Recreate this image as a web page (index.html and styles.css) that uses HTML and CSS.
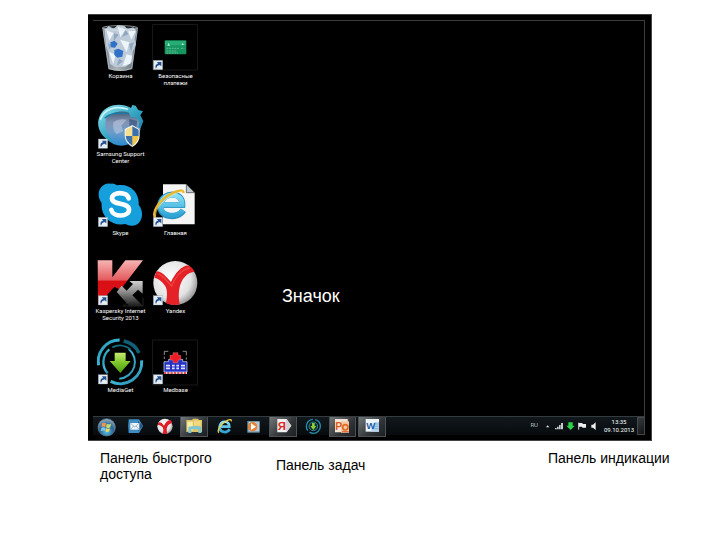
FILE: index.html
```html
<!DOCTYPE html>
<html lang="ru">
<head>
<meta charset="utf-8">
<title>Рабочий стол</title>
<link rel="stylesheet" href="styles.css">
</head>
<body>
<svg class="defs" aria-hidden="true">
  <defs>
    <linearGradient id="teal" x1="0" y1="0" x2="1" y2="1"><stop offset="0" stop-color="#8fe4ee"/><stop offset=".5" stop-color="#35a6c4"/><stop offset="1" stop-color="#0f6e9c"/></linearGradient>
    <linearGradient id="globe" x1="0" y1="0" x2="0" y2="1"><stop offset="0" stop-color="#31475f"/><stop offset=".4" stop-color="#8294b4"/><stop offset=".65" stop-color="#6f9cc9"/><stop offset="1" stop-color="#2a8ad0"/></linearGradient>
    <linearGradient id="red" x1="0" y1="0" x2="0" y2="1"><stop offset="0" stop-color="#f7b3b3"/><stop offset=".44" stop-color="#e25a5c"/><stop offset=".46" stop-color="#d90d14"/><stop offset="1" stop-color="#e0161c"/></linearGradient>
    <linearGradient id="grey" x1="0" y1="0" x2="0" y2="1"><stop offset="0" stop-color="#d0d0d0"/><stop offset=".45" stop-color="#8c8c8c"/><stop offset="1" stop-color="#1c1c1c"/></linearGradient>
    <linearGradient id="green" x1="0" y1="0" x2="0" y2="1"><stop offset="0" stop-color="#c8ea72"/><stop offset=".5" stop-color="#7cc62a"/><stop offset="1" stop-color="#4b9a12"/></linearGradient>
    <linearGradient id="ring" x1="0" y1="0" x2="1" y2="1"><stop offset="0" stop-color="#1f8fa8"/><stop offset=".5" stop-color="#3cb6d6"/><stop offset="1" stop-color="#2a86a4"/></linearGradient>
    <linearGradient id="bin" x1="0" y1="0" x2="1" y2="0"><stop offset="0" stop-color="#8e9aa2"/><stop offset=".4" stop-color="#e9f2f8"/><stop offset="1" stop-color="#7f8c96"/></linearGradient>
    <radialGradient id="ball" cx=".4" cy=".4" r=".65"><stop offset="0" stop-color="#fff"/><stop offset=".7" stop-color="#e2e2e2"/><stop offset="1" stop-color="#8f8f8f"/></radialGradient>
    <radialGradient id="orb" cx=".5" cy=".75" r=".7"><stop offset="0" stop-color="#58c4e8"/><stop offset=".55" stop-color="#2a6391"/><stop offset="1" stop-color="#8aa6ba"/></radialGradient>
    <linearGradient id="ie" x1="0" y1="0" x2="0" y2="1"><stop offset="0" stop-color="#8be0f8"/><stop offset="1" stop-color="#2fa5d6"/></linearGradient>
    <g id="shortcut">
      <rect width="28" height="28" fill="#e6edf2" stroke="#8798a6"/>
      <path d="M8 25C4 16 8 11 14 10L11 5l13 0 0 13-5-4c-6 1-9 4-11 11z" fill="#24518f"/>
    </g>
  </defs>
</svg>

<main class="screen">
  <section class="desktop" aria-label="Рабочий стол">
    <button class="shortcut"><svg class="pic" viewBox="39 41 144 144">
      <path d="M55 52L162 52 145 177Q109 187 73 177z" fill="url(#bin)" opacity=".75"/>
      <path d="M61 58l13-10 15 7 12-10 20 2 10 9 17-5 9 12-5 25 4 14-10 22-1 30-20 15-31 1-16-9-4-33-8-21z" fill="#bdcbd9"/>
      <path d="M67 60l22 8-13 23zM101 50l24 7-16 23zM132 63l23-2-13 27zM108 88l28 8-8 30zM75 125l20 8-7 29zM128 132l16 4-5 24-23 7z" fill="#edf4fa"/>
      <path d="M90 68l14 5-15 19zM125 58l8 14-19 8zM135 101l15-6-9 30zM82 105l-10-8 4 22zM105 145l12 8-19 14z" fill="#8fa8bf"/>
      <path d="M79 96l13-5 9 9-8 12-12-1zM91 119l12-4 15 7-3 17-15 3-9-8z" fill="#2f70c8"/>
      <ellipse cx="108" cy="53" rx="53" ry="7" fill="none" stroke="#dce5ea" stroke-width="2"/>
      <path d="M57 57L75 174Q108 187 143 174L160 57" fill="none" stroke="#b6c3cc" stroke-width="2"/>
    </svg><span class="name">Корзина</span></button>
    <button class="shortcut"><svg class="pic" viewBox="204 41 144 144">
      <rect x="206" y="43" width="134" height="136" fill="#000" stroke="#242424" stroke-width="2"/>
      <rect x="242" y="90" width="65" height="42" rx="3" fill="#159560"/>
      <path d="M243 92h62v13h-62z" fill="#28ac75"/>
      <path d="M250 106l4-9 4 9zM292 104l4-6 4 6z" fill="#b9f0d0"/>
      <path d="M247 114h38M291 114h10M247 122h30M247 128h35" stroke="#7ed1a8" stroke-width="2" stroke-dasharray="6 2"/>
      <use href="#shortcut" x="208" y="150"/>
    </svg><span class="name">Безопасные платежи</span></button>

    <button class="shortcut"><svg class="pic" viewBox="39 21 144 144">
      <circle cx="112" cy="94" r="58" fill="url(#globe)"/>
      <path d="M88 83Q102 70 128 74L112 92 118 108 98 118Q84 104 88 83z" fill="#cfdaea" opacity=".45"/>
      <path d="M136 72l24 6-4 24-20-4z" fill="#284a74" opacity=".6"/>
      <path d="M78 139C46 121 32 86 51 56 69 28 111 22 141 39l4-9 10 2 8 13 14 4-8 12 9 17-8 22-7-3 3-16-9-13-17-2-5-13C113 44 80 51 66 72 59 96 70 120 92 148z" fill="url(#teal)"/>
      <path d="M49 74C60 43 94 30 132 43" stroke="#c4f6f7" stroke-width="5" fill="none"/>
      <path d="M62 70C78 54 100 51 132 56" stroke="#167ca6" stroke-width="4" fill="none"/>
      <path d="M145 90l21 12 1 20q0 21-22 34-22-13-23-34l0-20z" fill="#edf3f5"/>
      <path d="M145 94v29h-20l0-19zM145 123h19q-2 18-19 29z" fill="#f5df8c"/>
      <path d="M145 123h19q-2 18-19 29z" fill="#f2c447"/>
      <path d="M145 94l19 10v19h-19zM125 123h20v29q-18-11-20-29z" fill="#3d6fa9"/>
      <use href="#shortcut" x="43" y="132"/>
    </svg><span class="name">Samsung Support Center</span></button>
    <span></span>

    <button class="shortcut"><svg class="pic" viewBox="39 17 144 144">
      <path d="M79 25Q89 22 99 30C137 22 167 52 164 88C184 113 173 153 142 151Q133 151 124 146C82 154 49 122 53 83C31 55 52 20 79 25z" fill="#159fdc"/>
      <path d="M134 69C130 48 84 48 84 69C84 91 135 80 135 103C135 125 88 127 82 104" fill="none" stroke="#fff" stroke-width="14" stroke-linecap="round"/>
      <use href="#shortcut" x="43" y="126"/>
    </svg><span class="name">Skype</span></button>
    <button class="shortcut"><svg class="pic" viewBox="204 17 144 144">
      <path d="M237 27h70l25 25v95h-95z" fill="#f5f5f5"/>
      <path d="M307 27v25h25z" fill="#bfc7cc" stroke="#303c43" stroke-width="2"/>
      <path d="M235 89H295C298 48 237 47 229 86C222 126 280 135 298 105" fill="none" stroke="#2b93c0" stroke-width="18"/>
      <path d="M235 88H294C296 51 240 49 231 86C225 122 277 131 297 104" fill="none" stroke="url(#ie)" stroke-width="15"/>
      <path d="M216 132C199 112 225 74 264 54C282 44 300 42 298 53" fill="none" stroke="#edb72a" stroke-width="7"/>
      <path d="M215 124C211 98 252 57 295 48" fill="none" stroke="#ffe687" stroke-width="2"/>
      <use href="#shortcut" x="208" y="126"/>
    </svg><span class="name">Главная</span></button>

    <button class="shortcut"><svg class="pic" viewBox="39 11 144 144">
      <path d="M41 15h44v51l39-51h53L109 103l-18-9-49 56z" fill="url(#red)"/>
      <path d="M176 77h-40l11 9-19 20-15-15-15 19 37 41h41l-31-31 17-17 14 12z" fill="url(#grey)"/>
      <path d="M122 124l14 13-18 15h59v-25" fill="none" stroke="#666" stroke-width="1"/>
      <use href="#shortcut" x="43" y="121"/>
    </svg><span class="name">Kaspersky Internet Security 2013</span></button>
    <button class="shortcut"><svg class="pic" viewBox="204 11 144 144">
      <circle cx="274" cy="83" r="66" fill="url(#ball)"/>
      <path d="M217 48C232 48 245 62 261 80C273 54 295 28 315 31Q326 36 332 49C309 50 291 72 286 100Q282 121 287 147Q264 152 246 143C250 122 251 103 243 91C234 77 224 70 211 67z" fill="#e32127"/>
      <path d="M220 55C235 58 248 77 263 92C274 64 294 42 317 38" fill="none" stroke="#ee4642" stroke-width="4"/>
      <use href="#shortcut" x="208" y="121"/>
    </svg><span class="name">Yandex</span></button>

    <button class="shortcut"><svg class="pic" viewBox="39 16 144 144">
      <g fill="none" stroke="url(#ring)">
        <path d="M44 98A64 64 0 0 1 107 22" stroke-width="9"/>
        <path d="M173 83A64 64 0 0 1 80 146" stroke-width="9"/>
        <path d="M71 122A50 50 0 0 1 76 50" stroke-width="7"/>
        <path d="M134 49A50 50 0 0 1 106 138" stroke-width="6"/>
        <path d="M119 25A64 64 0 0 1 165 61" stroke="#116078" stroke-width="11"/>
        <path d="M85 44A50 50 0 0 1 139 50" stroke="#176b80" stroke-width="6"/>
      </g>
      <path d="M92 60h33v25h15l-31 36-32-36h15z" fill="url(#green)"/>
      <use href="#shortcut" x="43" y="126"/>
    </svg><span class="name">MediaGet</span></button>
    <button class="shortcut"><svg class="pic" viewBox="204 16 144 144">
      <rect x="206" y="22" width="134" height="135" fill="#000" stroke="#242424" stroke-width="2"/>
      <path d="M241 67V56h12M296 56h11v12M241 72v7M307 74v7" fill="none" stroke="#ccc" stroke-width="2"/>
      <path d="M240 87h14v-7h42v7h13v31h-69z" fill="#2533c5" stroke="#dce0ff" stroke-width="2"/>
      <path d="M246 96h12v14h-12zM264 96h8v14h-8zM277 96h8v14h-8zM291 96h12v14h-12z" fill="#dfe2ff"/>
      <path d="M246 103h57" stroke="#2533c5" stroke-width="3"/>
      <path d="M267 60h15v8h8v14h-8v8h-15v-8h-9V68h9z" fill="#ee1c24" stroke="#f8a2a5" stroke-width="1"/>
      <path d="M240 121h69" stroke="#fff" stroke-width="5"/><path d="M240 121h69" stroke="#e02027" stroke-width="5" stroke-dasharray="6 4"/>
      <use href="#shortcut" x="208" y="126"/>
    </svg><span class="name">Medbase</span></button>
    <p class="note">Значок</p>
  </section>

  <footer class="taskbar">
    <nav class="tasks" aria-label="Панель задач">
      <button class="task" aria-label="Пуск"><svg viewBox="31 49 72 57">
        <circle cx="66" cy="77" r="26" fill="url(#orb)" stroke="#638096" stroke-width="2"/>
        <path d="M52 66q6-5 12-1l-2 11q-6-3-12 1z" fill="#ed9656"/><path d="M66 66q6 4 13 0l-2 11q-6 4-13 0z" fill="#c8dc72"/>
        <path d="M50 79q6-4 12 0l-2 9q-6-3-12 1z" fill="#81c6ee"/><path d="M64 80q6 4 12 0l-2 9q-6 4-12 0z" fill="#f7d35f"/>
      </svg></button>
      <button class="task" aria-label="Почта"><svg viewBox="117 51 72 57">
        <path d="M134 55h31l12 20-12 21h-31q-3-20 0-41z" fill="#418bc3"/><path d="M162 60l14 15-14 16z" fill="#1d5688"/>
        <path d="M139 66h27v20h-27z" fill="#eff5fa"/><path d="M139 66l13 12 14-12M139 86l10-11M166 86l-10-11" fill="none" stroke="#7195b2" stroke-width="2"/>
      </svg></button>
      <button class="task" aria-label="Yandex"><svg viewBox="205 51 72 57">
        <circle cx="244" cy="76" r="23" fill="url(#ball)"/>
        <path d="M224 65q8-5 17 9 9-18 21-16l4 8q-15 3-17 18l1 15h-12l1-15q-3-11-17-12z" fill="#df1b24"/>
      </svg></button>
      <button class="task open" aria-label="Проводник"><svg viewBox="296 50 72 57">
        <path d="M309 59h17l3-4h15l3 4h9v36h-47z" fill="#dec465"/>
        <path d="M312 64h16v27h-16z" fill="#f8eda7"/><path d="M332 61h20v15h-20z" fill="#eed980"/>
        <path d="M315 98V80q18-6 39 0v18h-9V87h-21v11z" fill="#80c5d5"/>
      </svg></button>
      <button class="task" aria-label="Internet Explorer"><svg viewBox="384 51 72 57">
        <path d="M409 77h27c1-19-25-20-29-1-2 17 20 24 30 9" fill="none" stroke="url(#ie)" stroke-width="8"/>
        <path d="M405 95c-8-5 5-27 24-36 9-5 15-4 12 2" fill="none" stroke="#efce49" stroke-width="4"/>
      </svg></button>
      <button class="task" aria-label="Проигрыватель"><svg viewBox="35 51 72 57">
        <path d="M54 60h37v35H54z" fill="#7295ab"/><path d="M58 63h32v28H58z" fill="#b8cbd5"/>
        <circle cx="70" cy="77" r="14" fill="#e68136"/><path d="M65 67l15 10-15 10z" fill="#fff"/>
      </svg></button>
      <button class="task open" aria-label="Яндекс"><svg viewBox="124 51 72 57">
        <path d="M143 57h28l14 20-14 20h-28z" fill="#f0f0f0"/><path d="M169 57l16 20-16 20z" fill="#d3d3d3"/>
        <text class="glyph ya" x="144" y="91">Я</text>
      </svg></button>
      <button class="task" aria-label="MediaGet"><svg viewBox="213 51 72 57">
        <circle cx="250" cy="76" r="21" fill="none" stroke="#2590ac" stroke-width="4" stroke-dasharray="45 7"/>
        <circle cx="250" cy="76" r="13" fill="#152c27" stroke="#2f88a2" stroke-width="3"/>
        <path d="M246 66h8v9h5l-9 12-9-12h5z" fill="#8bcf37"/>
      </svg></button>
      <button class="task open" aria-label="PowerPoint"><svg viewBox="303 50 72 57">
        <path d="M318 56h38l4 40h-42z" fill="#f6e5da"/><path d="M336 63h24v34h-24z" fill="#f7c7a2"/>
        <text class="glyph ppt" x="319" y="88">P</text><circle cx="349" cy="81" r="8" fill="none" stroke="#df6b24" stroke-width="5"/><path d="M339 94h20" stroke="#dc621e" stroke-width="3"/>
      </svg></button>
      <button class="task open" aria-label="Word"><svg viewBox="391 50 72 57">
        <path d="M408 56h40v38h-40z" fill="#edf4fa"/><path d="M434 65h14v29h-25z" fill="#b4d2ed"/>
        <text class="glyph word" x="410" y="86">W</text><path d="M437 71h10M436 78h11M434 85h13" stroke="#699bc9" stroke-width="2"/>
      </svg></button>
    </nav>
    <div class="tray">
      <span class="lang">RU</span>
      <svg class="status" viewBox="0 0 123 30" aria-hidden="true">
        <path d="M0 19l5-6 5 6z" fill="#ddd"/>
        <path d="M27 25v-4h5v4zM33 25v-8h5v8zM39 25V12h5v13zM45 25V6h6v19z" fill="#c6cbce"/>
        <path d="M67 4h13v10h6l-12 13-13-13h6z" fill="#2bd447"/>
        <path d="M98 5v21" stroke="#ddd" stroke-width="3"/><path d="M99 6h9l3 3h9v11h-10l-3-3h-8z" fill="#eee"/>
      </svg>
      <svg class="sound" viewBox="0 0 18 30" aria-hidden="true"><path d="M1 11h5l8-7v23l-8-7H1z" fill="#eee"/></svg>
      <time class="clock" datetime="2013-10-09T13:35">13:35<br>09.10.2013</time>
      <button class="peek" aria-label="Свернуть все окна"></button>
    </div>
  </footer>
</main>

<section class="captions">
  <p class="quick">Панель быстрого доступа</p>
  <p class="bar">Панель задач</p>
  <p>Панель индикации</p>
</section>
</body>
</html>
```
FILE: styles.css
```css
* { box-sizing: border-box; }

body {
  margin: 0;
  background: #fff;
  color: #000;
  font-family: "Liberation Sans", Arial, sans-serif;
}

p { margin: 0; }

button {
  margin: 0;
  padding: 0;
  border: 0;
  background: none;
  color: inherit;
  font: inherit;
}

svg { display: block; }

.defs {
  position: absolute;
  width: 0;
  height: 0;
}

.screen {
  margin: 14px 68px 0 88px;
  padding: 5px 6px 5px 5px;
  border: 1px solid #444;
  border-left: 0;
  background: #000;
  color: #fff;
}

.desktop {
  position: relative;
  display: grid;
  grid-template-columns: 55px 55px;
  grid-template-rows: repeat(5, 1fr);
  min-height: 396px;
  padding-top: 3px;
  border-top: 1px solid #3c3c3c;
  border-right: 1px solid #3c3c3c;
}

.shortcut {
  display: flex;
  flex-direction: column;
  align-items: center;
}

.pic {
  width: 48px;
  height: 48px;
}

.name {
  width: 50px;
  font: 6px/7px Roboto, "Noto Sans", sans-serif;
  text-align: center;
}

.note {
  position: absolute;
  left: 189px;
  top: 264px;
  font-size: 18px;
  line-height: 22px;
}

.taskbar {
  display: flex;
  justify-content: space-between;
  height: 19px;
  border-top: 1px solid #343c40;
  background: linear-gradient(#11181d, #070b0e);
}

.tasks {
  display: grid;
  grid-template-columns: 27px repeat(9, 1fr);
  width: 294px;
}

.task {
  display: flex;
  justify-content: center;
  align-items: center;
  margin: 0 1px;
}

.task svg {
  flex: none;
  width: 24px;
  height: 19px;
}

.open {
  border: 1px solid #4c5154;
  border-top: 0;
  background: linear-gradient(135deg, #73777a, #303437 60%, #1c2023);
}

.glyph {
  font-family: "Liberation Sans", Arial, sans-serif;
  font-weight: 700;
}

.ya { font-size: 34px; fill: #d92a25; }
.ppt { font-size: 31px; fill: #d95b18; }
.word { font-size: 29px; fill: #1d5fa8; }

.tray {
  display: flex;
  align-items: center;
  font: 6px/8px Roboto, "Noto Sans", sans-serif;
}

.lang {
  margin: 0 8px 2px 0;
  color: #b5babd;
}

.status {
  width: 41px;
  height: 10px;
}

.sound {
  width: 6px;
  height: 10px;
  margin-left: 4px;
}

.clock {
  width: 36px;
  margin-left: 4px;
  text-align: center;
}

.peek {
  align-self: stretch;
  width: 8px;
  border: 1px solid #43484b;
  background: linear-gradient(135deg, #383c3f, #111);
}

.captions {
  display: grid;
  grid-template-columns: 176px 272px 1fr;
  padding: 9px 20px 0 100px;
  font-size: 14px;
  line-height: 16px;
}

.quick { max-width: 140px; }

.bar { padding-top: 7px; }
```
